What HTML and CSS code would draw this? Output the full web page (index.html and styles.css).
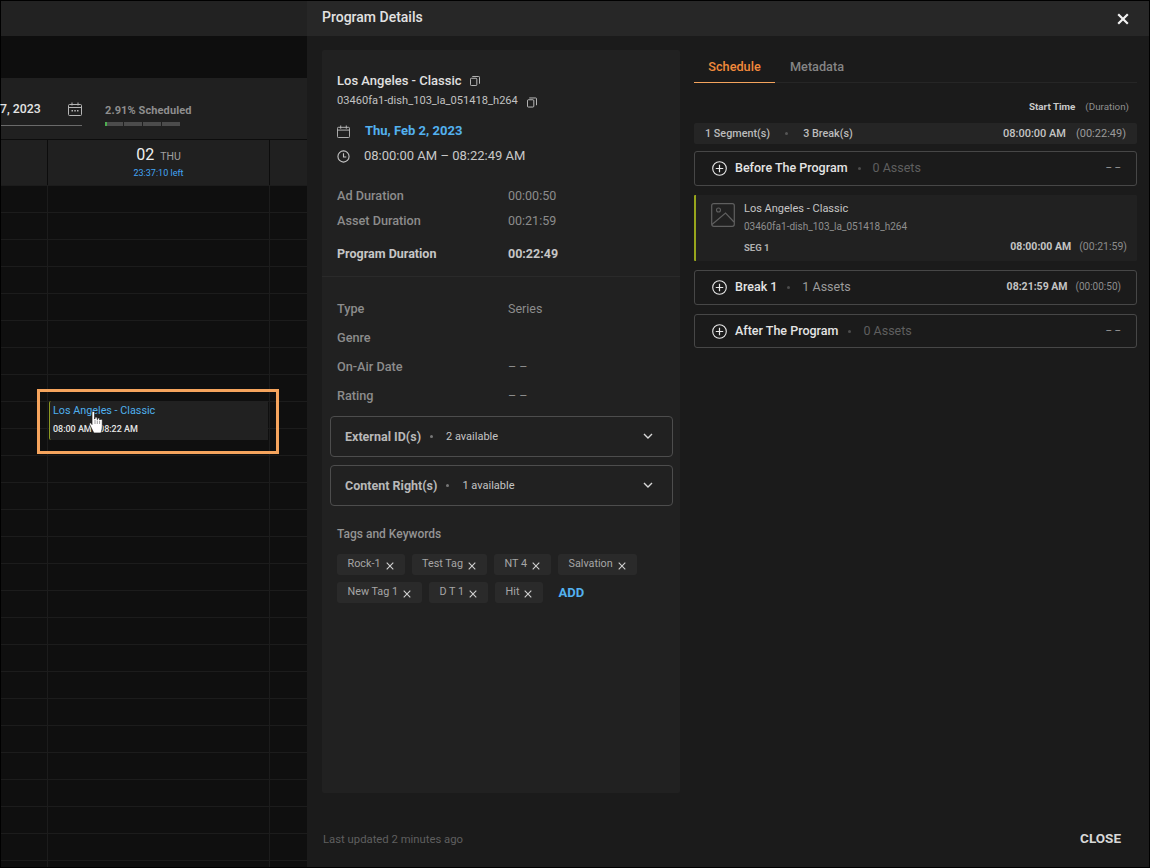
FILE: index.html
```html
<!DOCTYPE html>
<html lang="en">
<head>
<meta charset="utf-8">
<title>Program Details</title>
<link rel="stylesheet" href="styles.css">
</head>
<body>
<div class="app">
  <section class="scheduler">
    <div class="sch-top"></div>
    <div class="sch-band"></div>
    <div class="sch-toolbar">
      <div class="date-field">
        <span class="date-text">7, 2023</span>
        <svg class="date-icon" viewBox="0 0 14 16" width="14" height="16"><path d="M1.500 3.500h11a1 1 0 0 1 1 1v9a1 1 0 0 1-1 1h-11a1 1 0 0 1-1-1v-9a1 1 0 0 1 1-1zM.5 6.500h13M4 1.500v3M10 1.500v3" fill="none" stroke="#b5b5b5" stroke-width="1"/><path d="M3.500 9h1.500v1.500H3.500zM6.300 9h1.500v1.500H6.300zM9 9h1.500v1.500H9z" fill="#b5b5b5"/></svg>
      </div>
      <div class="sched">
        <div class="sched-text">2.91% Scheduled</div>
        <div class="sched-bar"><i class="seg seg-first"><b></b></i><i class="seg"></i><i class="seg"></i><i class="seg"></i></div>
      </div>
    </div>
    <div class="day-head">
      <div class="day-cell day-prev"></div>
      <div class="day-cell day-main">
        <div class="day-line"><span class="day-num">02</span><span class="day-name">THU</span></div>
        <div class="day-left">23:37:10 left</div>
      </div>
      <div class="day-cell"></div>
    </div>
    <div class="grid">
      <div class="grid-col grid-prev"></div>
      <div class="grid-col grid-main"></div>
      <div class="grid-col"></div>
      <div class="highlight"></div>
      <div class="event">
        <div class="event-title">Los Angeles - Classic</div>
        <div class="event-time">08:00 AM - 08:22 AM</div>
      </div>
      <svg class="cursor" viewBox="0 0 14 23" width="14" height="23"><path d="M3 1.500c0-1.400 2.600-1.400 2.600 0V8h.3V7c0-1.300 2.300-1.300 2.300 0v1.500h.3V8c0-1.300 2.200-1.300 2.200 0v1h.3c0-1.200 2.300-1.100 2.300.2V15c0 3-.7 4.500-1.200 7H4.800L.6 13.500c-.6-1.300 1-2.200 1.800-1.100L3 13.500z" fill="#fff" stroke="#1a1a1a" stroke-width=".7"/><path d="M6 9v4M8.300 9.500v3.500M10.600 10v3" stroke="#555" stroke-width=".6" fill="none"/></svg>
    </div>
  </section>

  <aside class="drawer">
    <header class="drawer-head">
      <h1 class="drawer-title">Program Details</h1>
      <svg class="close-x" viewBox="0 0 12 12" width="12" height="12"><path d="M1.200 1.200l9.600 9.600M10.800 1.200l-9.600 9.600" stroke="#f2f2f2" stroke-width="2.200" fill="none"/></svg>
    </header>
    <div class="drawer-body">
      <div class="card">
        <div class="card-top">
          <div class="prog-name"><span>Los Angeles - Classic</span>
            <svg class="copy" viewBox="0 0 11 11" width="10" height="10"><path d="M1.500 2.500h5a1 1 0 0 1 1 1v6a1 1 0 0 1-1 1h-5a1 1 0 0 1-1-1v-6a1 1 0 0 1 1-1zM2.500.5h7a1 1 0 0 1 1 1v7" fill="none" stroke="#c9c9c9"/></svg>
          </div>
          <div class="prog-id"><span>03460fa1-dish_103_la_051418_h264</span>
            <svg class="copy copy-id" viewBox="0 0 11 11" width="10" height="11"><path d="M1.500 2.500h5a1 1 0 0 1 1 1v6a1 1 0 0 1-1 1h-5a1 1 0 0 1-1-1v-6a1 1 0 0 1 1-1zM2.500.5h7a1 1 0 0 1 1 1v7" fill="none" stroke="#c9c9c9"/></svg>
          </div>
          <div class="prog-date">
            <svg class="ic14" viewBox="0 0 14 14" width="13" height="13"><path d="M1.500 2.500h11a1 1 0 0 1 1 1v9a1 1 0 0 1-1 1h-11a1 1 0 0 1-1-1v-9a1 1 0 0 1 1-1zM.5 5.500h13M4 .5v3.500M10 .5v3.500" fill="none" stroke="#bdbdbd"/></svg>
            <span>Thu, Feb 2, 2023</span>
          </div>
          <div class="prog-time">
            <svg class="ic14" viewBox="0 0 14 14" width="13" height="13"><circle cx="7" cy="7" r="6" fill="none" stroke="#c4c4c4" stroke-width="1.200"/><path d="M7 3.500V7.500H10" fill="none" stroke="#c4c4c4" stroke-width="1.200"/></svg>
            <span>08:00:00 AM – 08:22:49 AM</span>
          </div>
          <div class="kv kv-ad"><span class="k">Ad Duration</span><span class="v">00:00:50</span></div>
          <div class="kv kv-asset"><span class="k">Asset Duration</span><span class="v">00:21:59</span></div>
          <div class="kv kv-total"><span class="k">Program Duration</span><span class="v">00:22:49</span></div>
        </div>
        <div class="card-rest">
          <div class="kv kv-meta"><span class="k">Type</span><span class="v">Series</span></div>
          <div class="kv kv-meta"><span class="k">Genre</span><span class="v"></span></div>
          <div class="kv kv-meta"><span class="k">On-Air Date</span><span class="v">– –</span></div>
          <div class="kv kv-meta kv-last"><span class="k">Rating</span><span class="v">– –</span></div>
          <div class="acc">
            <span class="acc-name">External ID(s)</span><span class="dot"></span><span class="acc-count">2 available</span>
            <svg class="chev" viewBox="0 0 10 6" width="10" height="6"><path d="M1 1l4 4 4-4" fill="none" stroke="#d8d8d8" stroke-width="1.400"/></svg>
          </div>
          <div class="acc">
            <span class="acc-name">Content Right(s)</span><span class="dot"></span><span class="acc-count">1 available</span>
            <svg class="chev" viewBox="0 0 10 6" width="10" height="6"><path d="M1 1l4 4 4-4" fill="none" stroke="#d8d8d8" stroke-width="1.400"/></svg>
          </div>
          <div class="tags-title">Tags and Keywords</div>
          <div class="tags">
            <span class="tag">Rock-1<svg class="tag-x" viewBox="0 0 8 8" width="8" height="8"><path d="M.7.700l6.600 6.600M7.300.700L.7 7.300" stroke="#d0d0d0" stroke-width="1.100"/></svg></span>
            <span class="tag">Test Tag<svg class="tag-x" viewBox="0 0 8 8" width="8" height="8"><path d="M.7.700l6.600 6.600M7.300.700L.7 7.300" stroke="#d0d0d0" stroke-width="1.100"/></svg></span>
            <span class="tag">NT 4<svg class="tag-x" viewBox="0 0 8 8" width="8" height="8"><path d="M.7.700l6.600 6.600M7.300.700L.7 7.300" stroke="#d0d0d0" stroke-width="1.100"/></svg></span>
            <span class="tag">Salvation<svg class="tag-x" viewBox="0 0 8 8" width="8" height="8"><path d="M.7.700l6.600 6.600M7.300.700L.7 7.300" stroke="#d0d0d0" stroke-width="1.100"/></svg></span>
            <span class="tag">New Tag 1<svg class="tag-x" viewBox="0 0 8 8" width="8" height="8"><path d="M.7.700l6.600 6.600M7.300.700L.7 7.300" stroke="#d0d0d0" stroke-width="1.100"/></svg></span>
            <span class="tag">D T 1<svg class="tag-x" viewBox="0 0 8 8" width="8" height="8"><path d="M.7.700l6.600 6.600M7.300.700L.7 7.300" stroke="#d0d0d0" stroke-width="1.100"/></svg></span>
            <span class="tag">Hit<svg class="tag-x" viewBox="0 0 8 8" width="8" height="8"><path d="M.7.700l6.600 6.600M7.300.700L.7 7.300" stroke="#d0d0d0" stroke-width="1.100"/></svg></span>
            <span class="tag-add">ADD</span>
          </div>
        </div>
      </div>

      <div class="panel">
        <div class="tabs">
          <span class="tab tab-on">Schedule</span>
          <span class="tab tab-off">Metadata</span>
        </div>
        <div class="legend"><b>Start Time</b><span>(Duration)</span></div>
        <div class="summary">
          <span class="sum-item">1 Segment(s)</span><span class="dot dot-dim"></span><span class="sum-item">3 Break(s)</span>
          <span class="sum-right"><b>08:00:00 AM</b><span>(00:22:49)</span></span>
        </div>
        <div class="row row-before">
          <svg class="plus" viewBox="0 0 15 15" width="15" height="15"><circle cx="7.500" cy="7.500" r="6.800" fill="none" stroke="#e8e8e8" stroke-width="1.100"/><path d="M7.500 3.800v7.400M3.800 7.500h7.400" stroke="#e8e8e8" stroke-width="1.200"/></svg>
          <span class="row-name">Before The Program</span><span class="dot dot-dim"></span><span class="row-count muted">0 Assets</span>
          <span class="row-end">– –</span>
        </div>
        <div class="segment">
          <svg class="thumb" viewBox="0 0 24 24" width="24" height="24"><rect x=".7" y=".7" width="22.600" height="22.600" rx="2" fill="none" stroke="#5f5f5f" stroke-width="1.200"/><circle cx="7.500" cy="7" r="2" fill="none" stroke="#5f5f5f" stroke-width="1.100"/><path d="M1 21.500L14.500 10l8.500 9" fill="none" stroke="#5f5f5f" stroke-width="1.200"/></svg>
          <div class="seg-body">
            <div class="seg-name">Los Angeles - Classic</div>
            <div class="seg-id">03460fa1-dish_103_la_051418_h264</div>
            <div class="seg-foot"><span class="seg-label">SEG 1</span><span class="seg-time"><b>08:00:00 AM</b><span>(00:21:59)</span></span></div>
          </div>
        </div>
        <div class="row row-break">
          <svg class="plus" viewBox="0 0 15 15" width="15" height="15"><circle cx="7.500" cy="7.500" r="6.800" fill="none" stroke="#e8e8e8" stroke-width="1.100"/><path d="M7.500 3.800v7.400M3.800 7.500h7.400" stroke="#e8e8e8" stroke-width="1.200"/></svg>
          <span class="row-name">Break 1</span><span class="dot dot-dim"></span><span class="row-count">1 Assets</span>
          <span class="row-time"><b>08:21:59 AM</b><span>(00:00:50)</span></span>
        </div>
        <div class="row row-after">
          <svg class="plus" viewBox="0 0 15 15" width="15" height="15"><circle cx="7.500" cy="7.500" r="6.800" fill="none" stroke="#e8e8e8" stroke-width="1.100"/><path d="M7.500 3.800v7.400M3.800 7.500h7.400" stroke="#e8e8e8" stroke-width="1.200"/></svg>
          <span class="row-name">After The Program</span><span class="dot dot-dim"></span><span class="row-count muted">0 Assets</span>
          <span class="row-end">– –</span>
        </div>
      </div>
    </div>
    <footer class="drawer-foot">
      <span class="updated">Last updated 2 minutes ago</span>
      <span class="close-btn">CLOSE</span>
    </footer>
  </aside>
</div>
</body>
</html>
```
FILE: styles.css
```css
* { box-sizing: border-box; }
html, body { margin: 0; padding: 0; height: 100%; }
body { background: #000; font-family: Roboto, "Liberation Sans", sans-serif; color: #ddd; overflow: hidden; }
.app { width: 1150px; height: 868px; border: 1px solid #000; display: flex; }
.scheduler { width: 306px; display: flex; flex-direction: column; flex: none; }
.sch-top { height: 35px; background: #222; flex: none; }
.sch-band { height: 42px; background: #0e0e0e; flex: none; }
.sch-toolbar { height: 62px; background: #202020; display: flex; flex: none; border-bottom: 1px solid #0c0c0c; }
.date-field { width: 81px; height: 48px; border-bottom: 1px solid #6a6a6a; display: flex; padding-top: 23px; position: relative; flex: none; }
.date-text { font-size: 12.300px; font-weight: 500; color: #e4e4e4; line-height: 16px; margin-left: -1px; }
.date-icon { position: absolute; left: 67px; top: 23px; }
.sched { margin-left: 23px; padding-top: 26px; }
.sched-text { font-size: 11px; font-weight: 700; color: #8e8e8e; line-height: 13px; letter-spacing: .1px; white-space: nowrap; }
.sched-bar { display: flex; gap: 1px; margin-top: 5px; height: 4px; }
.seg { display: block; width: 18px; height: 4px; background: #4c4c4c; }
.seg b { display: block; width: 2px; height: 4px; background: #4caf50; }
.day-head { height: 45px; background: #202020; display: flex; flex: none; }
.day-cell { flex: none; width: 37px; }
.day-prev { width: 47px; border-right: 1px solid #0c0c0c; }
.day-main { width: 222px; border-right: 1px solid #0c0c0c; text-align: center; padding-top: 4px; }
.day-line { display: flex; align-items: baseline; justify-content: center; gap: 6px; line-height: 22px; height: 22px; }
.day-num { font-size: 16px; color: #efefef; }
.day-name { font-size: 10.500px; color: #a0a0a0; }
.day-left { font-size: 9px; color: #42a5f5; line-height: 12px; margin-top: 1px; }
.grid { position: relative; flex: 1; display: flex; background-color: #0f0f0f; background-image: linear-gradient(to bottom, transparent 26px, #1c1c1c 26px); background-size: 100% 27px; background-position: 0 1px; overflow: hidden; }
.grid-col { flex: none; width: 37px; }
.grid-prev { width: 47px; border-right: 1px solid #1c1c1c; }
.grid-main { width: 222px; border-right: 1px solid #1c1c1c; }
.highlight { position: absolute; left: 36px; top: 204px; width: 242px; height: 65px; border: 3px solid #f5a45d; }
.event { position: absolute; left: 48px; top: 216px; width: 219px; height: 39px; background: #212121; border-left: 1px solid #8d9a22; border-radius: 2px 0 0 2px; padding-left: 3px; }
.event-title { font-size: 10.800px; color: #4fb0ee; line-height: 13px; margin-top: 3px; }
.event-time { font-size: 9px; font-weight: 500; color: #e6e6e6; line-height: 11px; margin-top: 7px; letter-spacing: -.03px; }
.cursor { position: absolute; left: 88px; top: 226px; }

.drawer { width: 842px; display: flex; flex-direction: column; background: #1b1b1b; flex: none; }
.drawer-head { height: 35px; background: #272727; display: flex; align-items: center; justify-content: space-between; padding: 0 20px 0 15px; flex: none; }
.drawer-title { margin: 0 0 3px; font-size: 14px; font-weight: 500; color: #e2e2e2; }
.drawer-body { flex: 1; display: flex; padding: 14px 12px 0 15px; gap: 14px; min-height: 0; }
.card { width: 358px; height: 743px; background: #212121; flex: none; border-radius: 2px; }
.card-top { height: 227px; padding: 23px 15px 0; border-bottom: 1px solid #2a2a2a; }
.prog-name { display: flex; align-items: center; gap: 8px; font-size: 13px; font-weight: 500; color: #e0e0e0; line-height: 16px; }
.prog-id { display: flex; align-items: center; gap: 9px; font-size: 11.100px; color: #c2c2c2; line-height: 14px; margin-top: 5px; }
.copy-id { margin-top: 2px; }
.prog-date { display: flex; align-items: center; gap: 15px; font-size: 13px; font-weight: 700; color: #53b1ef; line-height: 16px; margin-top: 15px; }
.prog-time { display: flex; align-items: center; gap: 14px; font-size: 13px; color: #c8c8c8; line-height: 16px; margin-top: 9px; }
.ic14 { flex: none; }
.kv { display: flex; font-size: 12.500px; line-height: 16px; }
.k { width: 171px; font-size: 12.700px; font-weight: 500; color: #8c8c8c; flex: none; }
.v { color: #8c8c8c; }
.kv-ad { margin-top: 24px; }
.kv-asset { margin-top: 9px; }
.kv-total { margin-top: 17px; }
.kv-total .k, .kv-total .v { color: #c6c6c6; font-weight: 700; font-size: 12.500px; }
.card-rest { padding: 24px 7px 0 8px; }
.kv-meta { height: 29px; padding-left: 7px; }
.kv-last { height: 28px; }
.acc { height: 41px; border: 1px solid #4d4d4d; border-radius: 4px; display: flex; align-items: center; padding: 0 19px 0 14px; margin-bottom: 8px; }
.acc-name { font-size: 12.500px; font-weight: 700; color: #b8b8b8; }
.dot { width: 3px; height: 3px; border-radius: 50%; background: #777; margin: 0 13px 0 9px; flex: none; }
.acc-count { font-size: 11px; color: #c4c4c4; }
.chev { margin-left: auto; margin-bottom: 1px; }
.tags-title { font-size: 12px; font-weight: 500; color: #949494; line-height: 16px; margin: 20px 0 0 7px; }
.tags { display: flex; flex-wrap: wrap; gap: 7px 7px; margin: 12px 0 0 7px; width: 320px; align-items: center; }
.tag { display: inline-flex; align-items: center; height: 21px; padding: 0 11px 2px 10.500px; background: #2a2a2a; border-radius: 3px; font-size: 10.800px; color: #a6a6a6; white-space: nowrap; }
.tag-x { margin-left: 5px; margin-top: 4px; }
.tag-add { font-size: 13px; font-weight: 700; color: #53b1ef; margin-left: 8px; }

.panel { width: 443px; flex: none; }
.tabs { height: 33px; display: flex; border-bottom: 1px solid #262626; }
.tab { font-size: 12.700px; font-weight: 500; color: #858585; line-height: 16px; padding: 9px 14px 0; height: 33px; white-space: nowrap; }
.tab-off { padding-left: 15px; }
.tab-on { width: 81px; padding-left: 0; padding-right: 0; color: #f28a3c; border-bottom: 1px solid #f5a45d; text-align: center; }
.legend { display: flex; justify-content: flex-end; gap: 10px; font-size: 9.800px; line-height: 12px; color: #8f8f8f; padding: 18px 8px 0 0; height: 40px; }
.legend b { color: #c9c9c9; }
.summary { height: 21px; background: #252525; display: flex; align-items: center; padding: 0 11px; font-size: 10.800px; font-weight: 500; color: #bcbcbc; border-radius: 2px; }
.summary .dot { margin: 0 15px 0 15px; background: #555; }
.sum-right { margin-left: auto; display: flex; gap: 10px; font-size: 11px; }
.sum-right b { font-weight: 500; color: #c4c4c4; }
.sum-right span { color: #9a9a9a; font-weight: 400; }
.row { display: flex; align-items: center; border: 1px solid #474747; border-radius: 3px; padding: 0 15px 0 17px; }
.row-before { height: 35px; margin-top: 7px; }
.row-break { height: 35px; margin-top: 9px; }
.row-after { height: 34px; margin-top: 9px; }
.plus { flex: none; margin-right: 8px; }
.row-name { font-size: 12.500px; font-weight: 500; color: #e4e4e4; margin-bottom: 2px; }
.row .dot { margin: 0 12px 0 10px; background: #4c4c4c; }
.row-count { font-size: 12.500px; color: #9c9c9c; margin-bottom: 2px; }
.row-count.muted { color: #5f5f5f; }
.row-end { margin-left: auto; font-size: 10px; color: #9a9a9a; margin-bottom: 2px; }
.row-time { margin-left: auto; display: flex; gap: 8px; font-size: 10.500px; color: #8c8c8c; margin-bottom: 2px; }
.row-time b { color: #c4c4c4; }
.row-time span { font-size: 10px; line-height: 13px; }
.segment { height: 66px; margin-top: 9px; background: #212121; border-left: 2px solid #97a51c; display: flex; padding: 7px 10px 0 15px; border-radius: 1px; }
.thumb { flex: none; margin-right: 9px; margin-top: 1px; }
.seg-body { flex: 1; }
.seg-name { font-size: 11px; color: #c6c6c6; line-height: 13px; }
.seg-id { font-size: 10px; color: #8e8e8e; line-height: 12px; margin-top: 6px; }
.seg-foot { display: flex; justify-content: space-between; margin-top: 7px; line-height: 13px; font-size: 10.500px; }
.seg-label { font-weight: 700; font-size: 9.500px; color: #b0b0b0; margin-top: 1px; }
.seg-time { display: flex; gap: 8px; color: #8c8c8c; }
.seg-time b { color: #c4c4c4; }
.drawer-foot { height: 75px; display: flex; justify-content: space-between; padding: 16px 28px 0 16px; align-items: center; flex: none; }
.updated { font-size: 11.300px; color: #5f5f5f; margin-top: 3px; }
.close-btn { font-size: 13.500px; font-weight: 700; color: #d8d8d8; }
```
